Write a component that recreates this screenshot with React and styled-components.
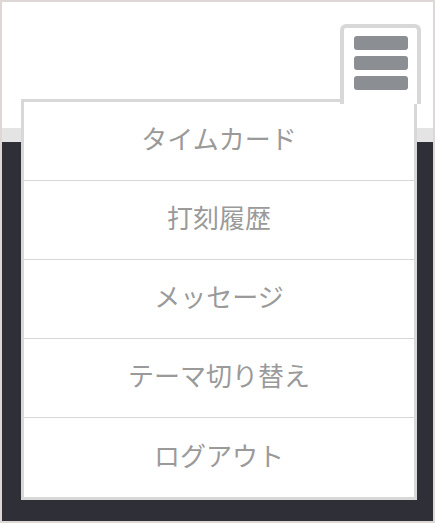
import React from 'react';
import styled, { createGlobalStyle } from 'styled-components';

const GlobalStyle = createGlobalStyle`
  * { box-sizing: border-box; }
  html, body { margin: 0; padding: 0; }
  body {
    font-family: "Noto Sans CJK JP", "Noto Sans", sans-serif;
    background: #ffffff;
  }
`;

const Frame = styled.div`
  width: 435px;
  height: 523px;
  border: 2px solid #ddd8d6;
  display: flex;
  flex-direction: column;
  position: relative;
`;

const Header = styled.header`
  height: 140px;
  background: #ffffff;
  border-bottom: 14px solid #e4e4e4;
  flex-shrink: 0;
`;

const Body = styled.main`
  flex: 1;
  background: #2f2f37;
`;

const MenuButton = styled.button`
  position: absolute;
  top: 22px;
  left: 338px;
  width: 81px;
  height: 80px;
  padding: 0;
  border: 4px solid #d8d8d8;
  border-bottom: none;
  border-radius: 6px 6px 0 0;
  background: #ffffff;
  display: flex;
  flex-direction: column;
  align-items: center;
  justify-content: flex-start;
  gap: 6px;
  padding-top: 8px;
  cursor: pointer;
  z-index: 2;
`;

const Bar = styled.span`
  display: block;
  width: 54px;
  height: 14px;
  border-radius: 3px;
  background: #8b8f93;
`;

const Menu = styled.nav`
  position: absolute;
  top: 97px;
  left: 19px;
  width: 396px;
  border: 3px solid #d8d8d8;
  background: #ffffff;
  z-index: 1;
`;

const Item = styled.a`
  display: flex;
  align-items: center;
  justify-content: center;
  height: 79px;
  padding-bottom: 6px;
  font-size: 26px;
  line-height: 1;
  color: #9a9a9a;
  text-decoration: none;
  border-bottom: ${p => (p.$last ? 'none' : '1px solid #d8d8d8')};
`;

const items = ['タイムカード', '打刻履歴', 'メッセージ', 'テーマ切り替え', 'ログアウト'];

export default function App() {
  return (
    <>
      <GlobalStyle />
      <Frame>
        <Header />
        <Body />
        <MenuButton aria-label="menu">
          <Bar />
          <Bar />
          <Bar />
        </MenuButton>
        <Menu>
          {items.map((t, i) => (
            <Item key={t} href="#" $last={i === items.length - 1}>{t}</Item>
          ))}
        </Menu>
      </Frame>
    </>
  );
}
